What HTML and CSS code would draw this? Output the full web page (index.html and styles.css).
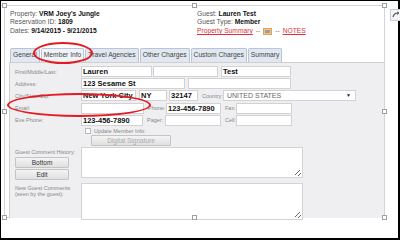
FILE: index.html
```html
<!DOCTYPE html>
<html lang="en">

<head>
    <meta charset="UTF-8">
    <meta name="viewport" content="width=device-width, initial-scale=1.0">
    <title>Reservation - Member Info</title>
    <link rel="stylesheet" href="styles.css">
</head>

<body>
    <div class="screen">
        <div class="frame">
            <div class="header">
                <div class="info main">
                    <div>Property: <b>VRM Joey's Jungle</b></div>
                    <div>Reservation ID: <b>1809</b></div>
                    <div>Dates: <b>9/14/2015 - 9/21/2015</b></div>
                </div>
                <div class="info guest">
                    <div>Guest: <b>Lauren Test</b></div>
                    <div>Guest Type: <b>Member</b></div>
                    <div class="links">
                        <a href="#">Property Summary</a> <span class="dash">--</span>
                        <span class="cal"><span></span></span>
                        <span class="dash">--</span> <a href="#">NOTES</a>
                    </div>
                </div>
            </div>

            <div class="tabs">
                <div class="tab">General</div>
                <div class="tab active">Member Info</div>
                <div class="tab">Travel Agencies</div>
                <div class="tab">Other Charges</div>
                <div class="tab">Custom Charges</div>
                <div class="tab">Summary</div>
            </div>

            <div class="panel">
                <div class="row">
                    <label class="lbl">First/Middle/Last:</label>
                    <div class="field" style="width: 71px;">Lauren</div>
                    <div class="field" style="width: 65px;"></div>
                    <div class="field gap2" style="width: 70px;">Test</div>
                </div>
                <div class="row">
                    <label class="lbl">Address:</label>
                    <div class="field" style="width: 104px;">123 Sesame St</div>
                    <div class="field gap2" style="width: 103px;"></div>
                </div>
                <div class="row">
                    <label class="lbl">City/State/Zip:</label>
                    <div class="field" style="width: 55px;">New York City</div>
                    <div class="field gap2" style="width: 28px;">NY</div>
                    <div class="field gap1" style="width: 29px;">32147</div>
                    <label class="sub" style="width: 24px;">Country:</label>
                    <div class="field select" style="width: 133px;">UNITED STATES <span class="arrow">▼</span></div>
                </div>
                <div class="row">
                    <label class="lbl">Email:</label>
                    <div class="field" style="width: 63px;"></div>
                    <label class="sub" style="width: 21px;">Phone:</label>
                    <div class="field" style="width: 55px;">123-456-7890</div>
                    <label class="sub" style="width: 14px;">Fax:</label>
                    <div class="field" style="width: 56px;"></div>
                </div>
                <div class="row">
                    <label class="lbl">Eve Phone:</label>
                    <div class="field" style="width: 62px;">123-456-7890</div>
                    <label class="sub" style="width: 21px;">Pager:</label>
                    <div class="field" style="width: 56px;"></div>
                    <label class="sub" style="width: 14px;">Cell:</label>
                    <div class="field" style="width: 56px;"></div>
                </div>
                <div class="check-row">
                    <span class="box"></span>
                    <span>Update Member Info:</span>
                </div>
                <div class="sig-row">
                    <button class="btn sig">Digital Signature</button>
                </div>
                <div class="comment-row">
                    <div class="side">
                        <div class="side-lbl">Guest Comment History:</div>
                        <button class="btn side-btn">Bottom</button>
                        <button class="btn side-btn">Edit</button>
                    </div>
                    <div class="area history"><span class="grip"></span></div>
                </div>
                <div class="comment-row">
                    <div class="side">
                        <div class="side-lbl">New Guest Comments<br>(seen by the guest):</div>
                    </div>
                    <div class="area newc"><span class="grip"></span></div>
                </div>
            </div>

            <div class="ring ring-tab"></div>
            <div class="ring ring-email"></div>

            <span class="handle h-tl"></span>
            <span class="handle h-tm"></span>
            <span class="handle h-tr"></span>
            <span class="handle h-ml"></span>
            <span class="handle h-mr"></span>
            <span class="handle h-bl"></span>
            <span class="handle h-bm"></span>
            <span class="handle h-br"></span>
        </div>

        <div class="layout-btn">
            <svg width="8" height="8" viewBox="0 0 8 8">
                <path d="M1 6 Q2 2 6 2" stroke="#555" stroke-width="1.2" fill="none" />
                <path d="M5 1 L7 2 L5 3.5" stroke="#555" stroke-width="1" fill="none" />
            </svg>
        </div>
    </div>
</body>

</html>
```

FILE: styles.css
```css
* {
    margin: 0;
    padding: 0;
    box-sizing: border-box;
}

body {
    font-family: 'Liberation Sans', Arial, sans-serif;
    background: #fff;
    width: 400px;
    height: 240px;
    overflow: hidden;
}

.screen {
    position: relative;
    width: 400px;
    height: 240px;
    border: 1px solid #000;
    border-right-width: 2px;
    border-bottom-width: 2px;
    padding: 4px 0 0 3px;
    background: #fff;
}

.frame {
    position: relative;
    width: 381px;
    height: 213px;
    border: 1px solid #d4d4d4;
    background: #fff;
    overflow: visible;
}

.header {
    display: flex;
    height: 42px;
    padding: 4px 0 0 5px;
    font-size: 6.7px;
    color: #555;
}

.info div {
    line-height: 8px;
}

.info b {
    color: #111;
}

.main {
    width: 187px;
}

.main div:nth-child(3) {
    margin-top: 0.5px;
}

.links {
    display: flex;
    align-items: center;
    gap: 3px;
    margin-top: 1px;
}

.links a {
    color: #e0303a;
    text-decoration: underline;
}

.dash {
    color: #777;
}

.cal {
    display: inline-block;
    width: 9px;
    height: 7px;
    background: #f5c48a;
    border: 1px solid #e8a050;
    padding: 1px;
}

.cal span {
    display: block;
    width: 100%;
    height: 100%;
    background: #8f9fb5;
}

.tabs {
    display: flex;
    gap: 1px;
    padding-left: 5px;
    height: 14px;
}

.tab {
    height: 14px;
    padding: 0 2px;
    font-size: 6.7px;
    line-height: 12px;
    color: #444;
    background: #e2e8f1;
    border: 1px solid #b9c5d6;
    border-bottom: none;
    border-radius: 2px 2px 0 0;
    white-space: nowrap;
}

.tab.active {
    background: #f0f3f8;
}

.panel {
    margin-left: 4px;
    height: 156px;
    background: #efeff1;
    border-top: 1px solid #cfcfd2;
    border-left: 1px solid #cfcfd2;
    padding: 3px 0 0 5px;
}

.row {
    display: flex;
    align-items: center;
    height: 11px;
    margin-bottom: 1.2px;
}

.lbl {
    width: 66px;
    font-size: 5.5px;
    color: #888;
    white-space: nowrap;
}

.sub {
    font-size: 5.5px;
    color: #888;
    padding-left: 3px;
    white-space: nowrap;
}

.field {
    height: 11px;
    background: #fff;
    border: 1px solid #d2d2d4;
    margin-right: 1px;
    font-size: 7.5px;
    font-weight: bold;
    color: #111;
    line-height: 9px;
    padding-left: 1px;
    white-space: nowrap;
    overflow: hidden;
}

.gap1 {
    margin-left: 1px;
}

.gap2 {
    margin-left: 2px;
}

.select {
    position: relative;
    font-weight: normal;
    font-size: 7px;
    color: #666;
    padding-left: 3px;
}

.arrow {
    position: absolute;
    right: 4px;
    top: 0;
    font-size: 5px;
    color: #222;
}

.check-row {
    display: flex;
    align-items: center;
    gap: 3px;
    height: 8px;
    margin-left: 70px;
    font-size: 5.5px;
    color: #888;
}

.box {
    width: 6px;
    height: 6px;
    background: #fff;
    border: 1px solid #bbb;
}

.sig-row {
    padding-left: 76px;
}

.btn {
    font-family: inherit;
    background: linear-gradient(#f4f4f4, #e0e0e0);
    border: 1px solid #c4c4c4;
    border-radius: 1px;
    color: #333;
    font-size: 6.5px;
    display: block;
}

.sig {
    width: 80px;
    height: 11px;
    color: #aaa;
}

.comment-row {
    display: flex;
    margin-top: 1.5px;
}

.side {
    width: 66px;
}

.side-lbl {
    font-size: 5.5px;
    color: #888;
    line-height: 6px;
    padding-top: 2px;
    height: 10px;
}

.side-btn {
    width: 54px;
    height: 11px;
    margin-bottom: 1px;
}

.area {
    position: relative;
    width: 222px;
    background: #fff;
    border: 1px solid #d4d4d6;
}

.history {
    height: 31px;
}

.newc {
    height: 37px;
}

.grip {
    position: absolute;
    right: 1px;
    bottom: 1px;
    width: 6px;
    height: 6px;
    background: linear-gradient(135deg, transparent 40%, #666 40%, #666 50%, transparent 50%, transparent 70%, #666 70%, #666 80%, transparent 80%);
}

.ring {
    position: absolute;
    border: 2.5px solid #e41b23;
    border-radius: 50%;
}

.ring-tab {
    left: 28px;
    top: 36px;
    width: 60px;
    height: 22px;
}

.ring-email {
    left: 2px;
    top: 87px;
    width: 144px;
    height: 24px;
}

.handle {
    position: absolute;
    width: 5px;
    height: 5px;
    background: #fff;
    border: 1px solid #a0a0a0;
}

.h-tl { left: -3px; top: -3px; }
.h-tm { left: 187px; top: -3px; }
.h-tr { right: -3px; top: -3px; }
.h-ml { left: -3px; top: 103px; }
.h-mr { right: -3px; top: 103px; }
.h-bl { left: -3px; bottom: -3px; }
.h-bm { left: 187px; bottom: -3px; }
.h-br { right: -3px; bottom: -3px; }

.layout-btn {
    position: absolute;
    left: 389px;
    top: 8px;
    width: 11px;
    height: 12px;
    background: #f3f5f8;
    border: 1px solid #c6cdd8;
    display: flex;
    align-items: center;
    justify-content: center;
}
```
